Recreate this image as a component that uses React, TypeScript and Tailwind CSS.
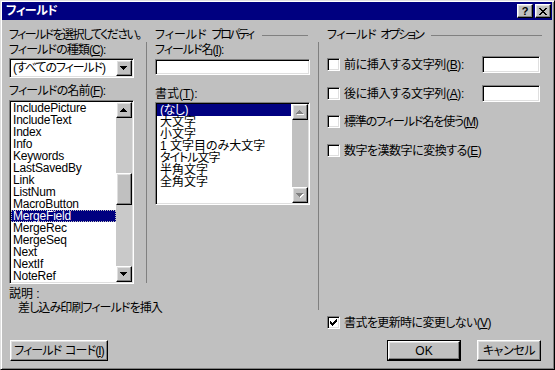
import React from "react";

const sunken =
  "border border-t-[#808080] border-l-[#808080] border-b-white border-r-white shadow-[inset_1px_1px_0_#000,inset_-1px_-1px_0_#dfdfdf] p-[1px]";
const raised =
  "border border-t-white border-l-white border-b-black border-r-black shadow-[inset_-1px_-1px_0_#808080,inset_1px_1px_0_#dfdfdf]";

function U({ children }: { children: React.ReactNode }) {
  return <span className="underline underline-offset-[1px]">{children}</span>;
}

function Arrow({ dir, disabled }: { dir: "up" | "down"; disabled?: boolean }) {
  const pts = dir === "up" ? "3.5,0 7,4 0,4" : "0,0 7,0 3.5,4";
  return (
    <svg width="8" height="5" viewBox="0 0 8 5" shapeRendering="crispEdges">
      {disabled && <polygon points={pts} fill="#fff" transform="translate(1,1)" />}
      <polygon points={pts} fill={disabled ? "#808080" : "#000"} />
    </svg>
  );
}

function ScrollBtn({ dir, disabled }: { dir: "up" | "down"; disabled?: boolean }) {
  return (
    <div className={`${raised} w-[16px] h-[16px] flex items-center justify-center bg-[#c0c0c0]`}>
      <Arrow dir={dir} disabled={disabled} />
    </div>
  );
}

function Check({ checked }: { checked?: boolean }) {
  return (
    <div className={`${sunken} w-[13px] h-[13px] bg-white flex items-center justify-center shrink-0`}>
      {checked && (
        <svg width="7" height="7" viewBox="0 0 7 7" shapeRendering="crispEdges">
          <path d="M0 2h1v1h1v1h1V3h1V2h1V1h1V0h1v3h-1v1h-1v1h-1v1h-1v1H2V6H1V5H0z" fill="#000" />
        </svg>
      )}
    </div>
  );
}

const fieldNames = [
  "IncludePicture",
  "IncludeText",
  "Index",
  "Info",
  "Keywords",
  "LastSavedBy",
  "Link",
  "ListNum",
  "MacroButton",
  "MergeField",
  "MergeRec",
  "MergeSeq",
  "Next",
  "NextIf",
  "NoteRef",
];

const formats: { t: string; cls: string }[] = [
  { t: "(なし)", cls: "tracking-[-0.5px]" },
  { t: "大文字", cls: "" },
  { t: "小文字", cls: "" },
  { t: "1 文字目のみ大文字", cls: "" },
  { t: "タイトル文字", cls: "tracking-[-1px]" },
  { t: "半角文字", cls: "" },
  { t: "全角文字", cls: "" },
];

export default function App() {
  return (
    <div className="w-[555px] h-[370px] bg-[#c0c0c0] border border-t-[#dfdfdf] border-l-[#dfdfdf] border-b-black border-r-black shadow-[inset_1px_1px_0_#fff,inset_-1px_-1px_0_#808080] p-[1px] text-black text-[12px] leading-[12px] font-['Liberation_Sans','Noto_Sans_CJK_JP',sans-serif] [font-feature-settings:'palt'] overflow-hidden">
      {/* Title bar */}
      <div className="h-[18px] mr-[1px] bg-[#000080] flex items-center justify-between pl-[4px] pr-[1px]">
        <span className="text-white font-bold text-[12px] leading-[13px] tracking-[-0.5px]">フィールド</span>
        <div className="flex gap-[2px]">
          <div className={`${raised} w-[16px] h-[14px] bg-[#c0c0c0] flex items-center justify-center font-bold text-[11px] leading-[11px]`}>?</div>
          <div className={`${raised} w-[16px] h-[14px] bg-[#c0c0c0] flex items-center justify-center`}>
            <svg width="8" height="7" viewBox="0 0 8 7" shapeRendering="crispEdges">
              <path d="M0 0h2v1h1v1h2V1h1V0h2v1H7v1H6v1H5v1h1v1h1v1h1v1H6V6H5V5H3v1H2v1H0V6h1V5h1V4h1V3H2V2H1V1H0z" fill="#000" />
            </svg>
          </div>
        </div>
      </div>

      {/* Main area */}
      <div className="h-[320px] pt-[9px] pl-[7px] flex items-start">
        {/* Left column */}
        <div className="w-[125px] flex flex-col">
          <div className="h-[12px] whitespace-nowrap tracking-[-1.6px]">フィールドを選択してください。</div>
          <div className="h-[12px] mt-[3px] whitespace-nowrap tracking-[-0.9px]">
            フィールドの種類(<U>C</U>):
          </div>
          <div className={`${sunken} mt-[2px] h-[20px] bg-white flex items-center`}>
            <div className="flex-1 pl-[2px] whitespace-nowrap tracking-[-1.1px]">(すべてのフィールド)</div>
            <ScrollBtn dir="down" />
          </div>
          <div className="h-[12px] mt-[7px] whitespace-nowrap tracking-[-0.8px]">
            フィールドの名前(<U>F</U>):
          </div>
          <div className={`${sunken} mt-[3px] h-[184px] bg-white flex`}>
            <div className="flex-1 flex flex-col overflow-hidden tracking-[-0.2px]">
              {fieldNames.map((n) => (
                <div
                  key={n}
                  className={
                    n === "MergeField"
                      ? "h-[12px] pl-[1px] bg-[#000080] text-white border border-dotted border-[#c0c0c0] leading-[10px]"
                      : "h-[12px] pl-[2px]"
                  }
                >
                  {n}
                </div>
              ))}
            </div>
            <div className="w-[16px] flex flex-col bg-[#c0c0c0]">
              <ScrollBtn dir="up" />
              <div className="flex-1 flex flex-col bg-[#c9c9c9]">
                <div className={`${raised} mt-[55px] h-[32px] bg-[#c0c0c0]`} />
              </div>
              <ScrollBtn dir="down" />
            </div>
          </div>
          <div className="h-[12px] mt-[4px] whitespace-nowrap">説明 :</div>
          <div className="h-[12px] mt-[2px] pl-[9px] whitespace-nowrap tracking-[-0.9px]">差し込み印刷フィールドを挿入</div>
        </div>

        {/* Separator 1 */}
        <div className="ml-[12px] mt-[13px] w-px h-[241px] bg-[#808080]" />

        {/* Middle column */}
        <div className="ml-[8px] w-[155px] flex flex-col">
          <div className="h-[12px] flex items-center pr-[2px]">
            <span className="whitespace-nowrap">フィールド</span>
            <span className="ml-[5px] whitespace-nowrap tracking-[-2.5px]">プロパティ</span>
            <div className="flex-1 ml-[9px] h-px bg-[#808080]" />
          </div>
          <div className="h-[12px] mt-[3px] whitespace-nowrap tracking-[-1px]">
            フィールド名(<U>I</U>):
          </div>
          <div className={`${sunken} mt-[3px] h-[16px] bg-white`} />
          <div className="h-[12px] mt-[13px] whitespace-nowrap">
            書式(<U>T</U>):
          </div>
          <div className={`${sunken} mt-[2px] h-[103px] bg-white flex`}>
            <div className="flex-1 flex flex-col overflow-hidden pr-[1px]">
              {formats.map((f, i) => (
                <div
                  key={f.t}
                  className={
                    i === 0
                      ? `h-[12px] pl-[3px] bg-[#000080] text-white whitespace-nowrap ${f.cls}`
                      : `h-[12px] pl-[3px] whitespace-nowrap ${f.cls}`
                  }
                >
                  {f.t}
                </div>
              ))}
            </div>
            <div className="w-[16px] flex flex-col justify-between bg-[#c0c0c0]">
              <ScrollBtn dir="up" disabled />
              <ScrollBtn dir="down" disabled />
            </div>
          </div>
        </div>

        {/* Separator 2 */}
        <div className="ml-[8px] mt-[13px] w-px h-[268px] bg-[#808080]" />

        {/* Right column */}
        <div className="ml-[8px] w-[215px] flex flex-col">
          <div className="h-[12px] flex items-center">
            <span className="whitespace-nowrap tracking-[-0.5px]">フィールド</span>
            <span className="ml-[4px] whitespace-nowrap tracking-[-2px]">オプション</span>
            <div className="flex-1 ml-[8px] h-px bg-[#808080]" />
          </div>
          <div className="mt-[15px] h-[17px] flex items-center">
            <Check />
            <span className="ml-[4px] whitespace-nowrap tracking-[-0.35px]">
              前に挿入する文字列(<U>B</U>):
            </span>
            <div className={`${sunken} ml-auto mr-[2px] w-[58px] h-[17px] bg-white`} />
          </div>
          <div className="mt-[12px] h-[17px] flex items-center">
            <Check />
            <span className="ml-[4px] whitespace-nowrap tracking-[-0.35px]">
              後に挿入する文字列(<U>A</U>):
            </span>
            <div className={`${sunken} ml-auto mr-[2px] w-[58px] h-[17px] bg-white`} />
          </div>
          <div className="mt-[13px] h-[13px] flex items-center">
            <Check />
            <span className="ml-[4px] whitespace-nowrap tracking-[-1.1px]">
              標準のフィールド名を使う(<U>M</U>)
            </span>
          </div>
          <div className="mt-[16px] h-[13px] flex items-center">
            <Check />
            <span className="ml-[4px] whitespace-nowrap tracking-[-0.5px]">
              数字を漢数字に変換する(<U>E</U>)
            </span>
          </div>
          <div className="mt-[159px] h-[13px] flex items-center">
            <Check checked />
            <span className="ml-[4px] whitespace-nowrap tracking-[-0.6px]">
              書式を更新時に変更しない(<U>V</U>)
            </span>
          </div>
        </div>
      </div>

      {/* Bottom buttons */}
      <div className="h-[21px] pl-[8px] flex items-start">
        <div className={`${raised} w-[98px] h-[21px] flex items-center justify-center whitespace-nowrap tracking-[-0.9px]`}>
          <span>フィールド</span>
          <span className="ml-[4px]">
            コード(<U>I</U>)
          </span>
        </div>
        <div className="ml-[279px] w-[74px] h-[21px] border border-black">
          <div className={`${raised} w-full h-full flex items-center justify-center`}>OK</div>
        </div>
        <div className={`${raised} ml-[16px] w-[64px] h-[21px] flex items-center justify-center whitespace-nowrap tracking-[-0.4px]`}>
          キャンセル
        </div>
      </div>
    </div>
  );
}
